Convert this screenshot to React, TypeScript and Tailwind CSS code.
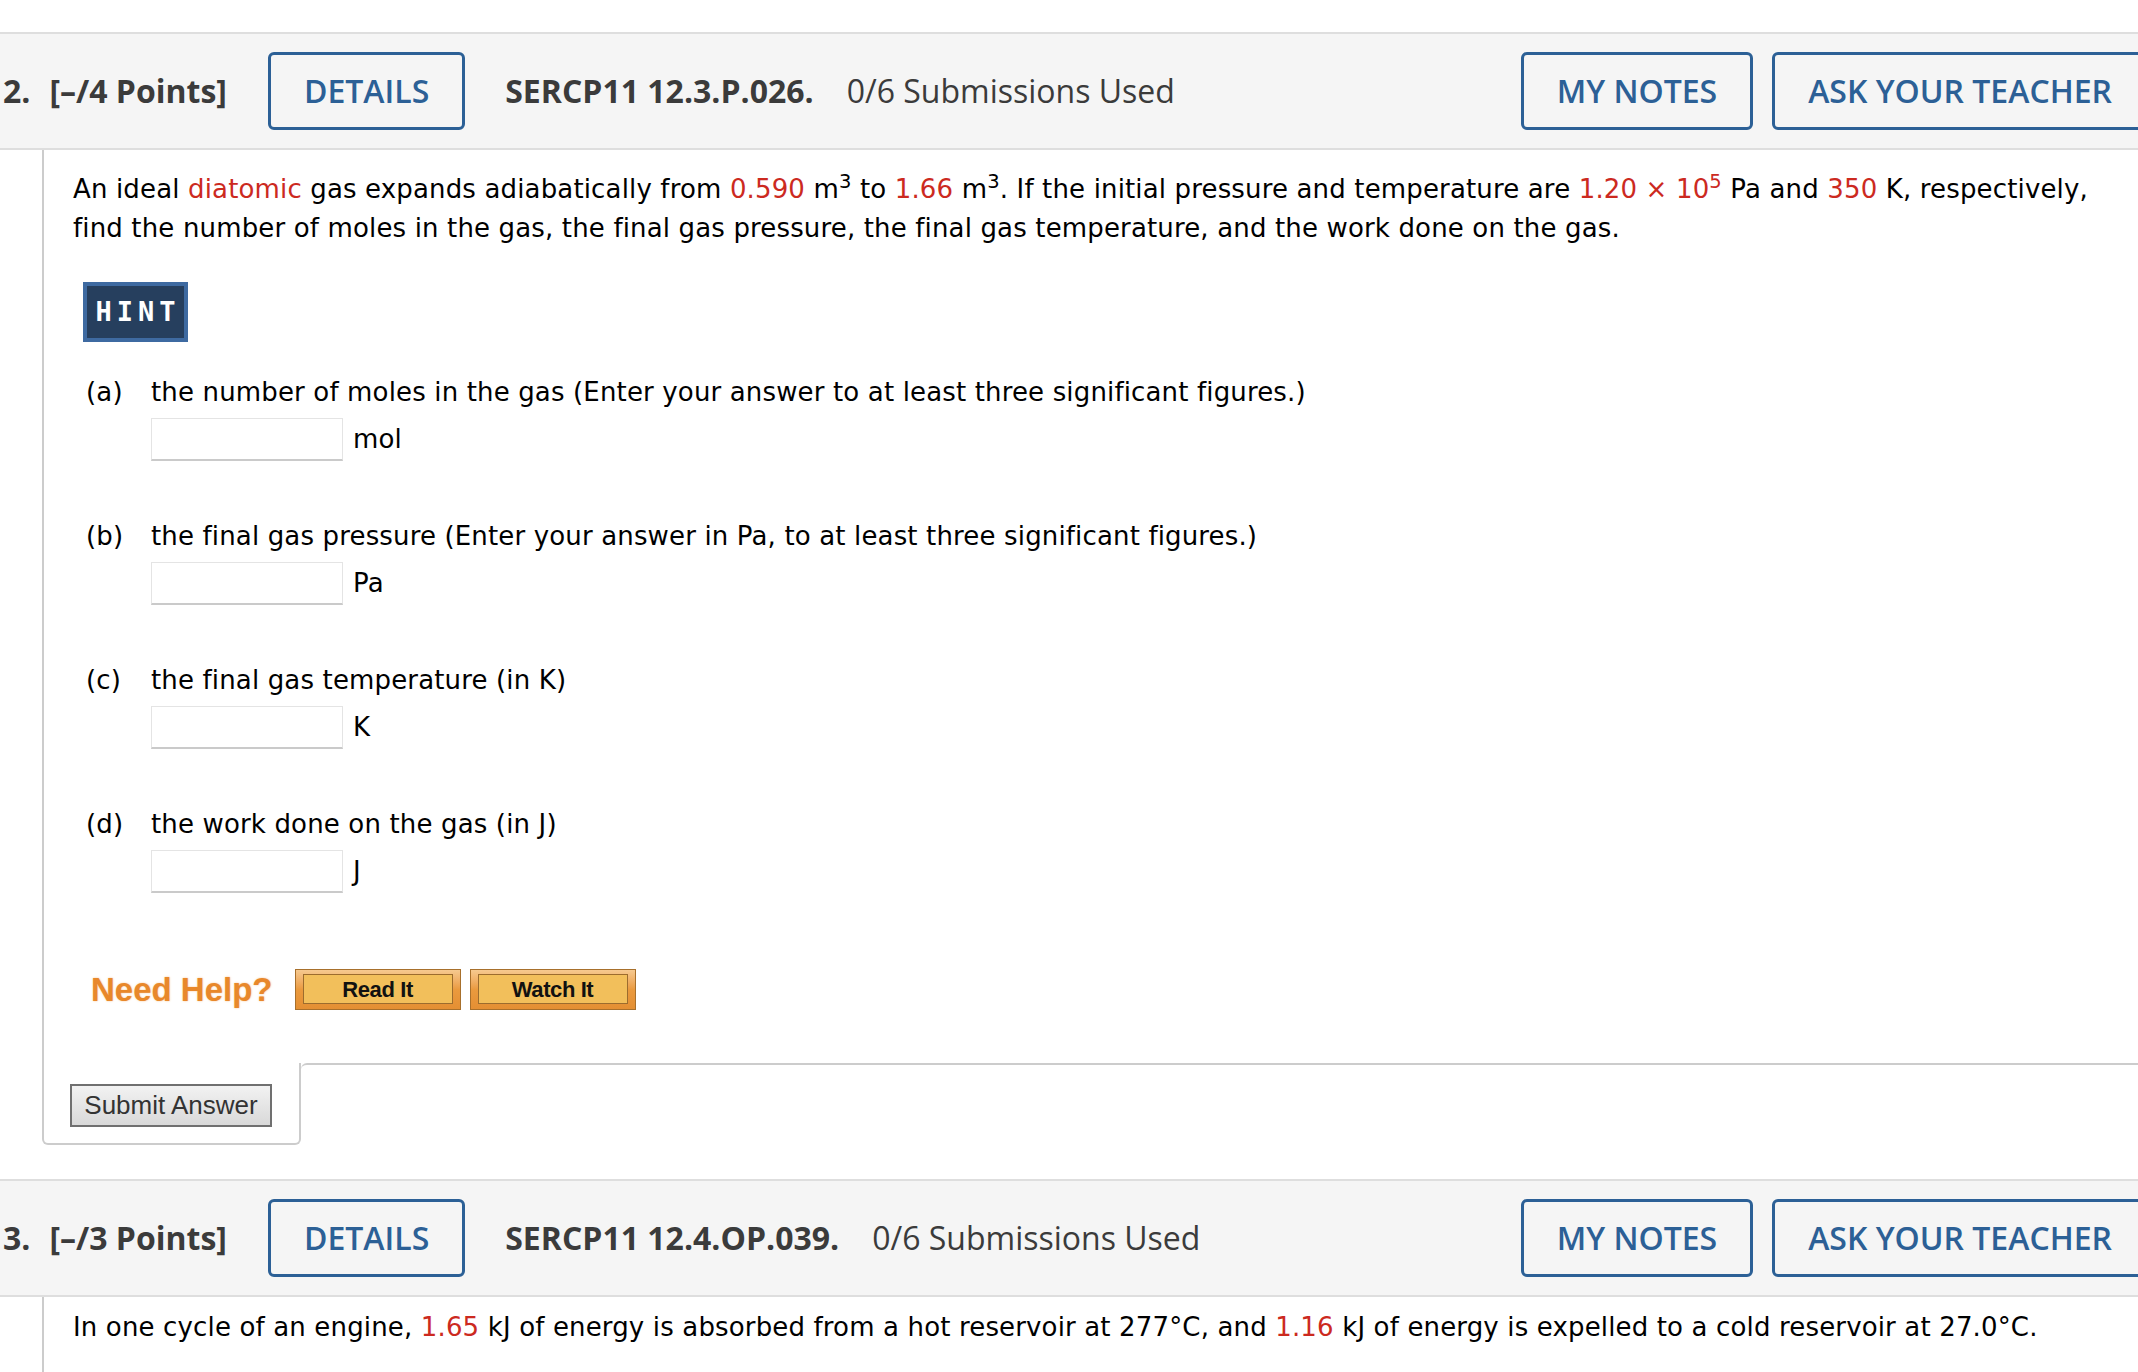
import React from "react";

const RED = "text-[#cc2a1f]";

function Header({ num, pts, code }: { num: string; pts: string; code: string }) {
  return (
    <div className="w-[2152px] h-[118px] bg-[#f5f5f5] border-y-2 border-[#dedede] flex items-center text-[32px] text-[#3b3b3b] tracking-normal [font-family:'Open_Sans',sans-serif]">
      <span className="ml-[3px] font-bold">{num}</span>
      <span className="ml-[19px] font-bold">{pts}</span>
      <button className="ml-[41px] h-[78px] px-[33px] border-[3px] border-[#2c6096] rounded-[6px] text-[#2c6096] font-semibold">
        DETAILS
      </button>
      <span className="ml-[40px] font-bold">{code}</span>
      <span className="ml-[33px] font-normal">0/6 Submissions Used</span>
      <div className="flex-1" />
      <button className="h-[78px] px-[33px] border-[3px] border-[#2c6096] rounded-[6px] text-[#2c6096] font-semibold">
        MY NOTES
      </button>
      <button className="ml-[19px] mr-[4px] h-[78px] px-[33px] border-[3px] border-[#2c6096] rounded-[6px] text-[#2c6096] font-semibold">
        ASK YOUR TEACHER
      </button>
    </div>
  );
}

function Part({ label, text, unit }: { label: string; text: string; unit: string }) {
  return (
    <div className="mt-[56px] first:mt-[31px]">
      <div className="flex leading-[39px]">
        <span className="ml-[13px] w-[65px]">{label}</span>
        <span>{text}</span>
      </div>
      <div className="flex items-center mt-[6px] ml-[78px]">
        <div className="w-[192px] h-[43px] border border-[#e4e4e4] border-b-2 border-b-[#cacaca] bg-white" />
        <span className="ml-[10px]">{unit}</span>
      </div>
    </div>
  );
}

function HelpButton({ label }: { label: string }) {
  return (
    <div className="w-[166px] h-[41px] border border-[#a8702c] bg-gradient-to-b from-[#f6c98f] via-[#ea9a3e] to-[#e48f33] pt-[4px] pb-[5px] px-[7px]">
      <div className="w-full h-full border border-[#9c6c2e] bg-[#f2bf5b] flex items-center justify-center text-[22px] font-bold text-[#111] tracking-[-0.4px] [font-family:'Liberation_Sans',Arial,sans-serif]">
        {label}
      </div>
    </div>
  );
}

export default function App() {
  return (
    <div className="w-full overflow-hidden bg-white [font-family:'DejaVu_Sans',Verdana,sans-serif] text-[26px] tracking-[0.15px] text-black">
      <div className="w-[2152px] pt-[32px]">
        <Header num="2." pts="[–/4 Points]" code="SERCP11 12.3.P.026." />

        <div className="ml-[42px] border-l-2 border-[#cccccc] pl-[29px] pt-[20px] pb-[48px]">
          <p className="leading-[39px] w-[2030px]">
            An ideal <span className={RED}>diatomic</span> gas expands adiabatically from{" "}
            <span className={RED}>0.590</span> m<sup>3</sup> to <span className={RED}>1.66</span> m
            <sup>3</sup>. If the initial pressure and temperature are{" "}
            <span className={RED}>
              1.20 × 10<sup>5</sup>
            </span>{" "}
            Pa and <span className={RED}>350</span> K, respectively, find the number of moles in the gas, the final gas
            pressure, the final gas temperature, and the work done on the gas.
          </p>

          <div className="mt-[34px] ml-[10px] w-[105px] h-[60px] border-4 border-[#3e6aa1] bg-[#263f5e] flex items-center justify-center text-white font-bold text-[27px] tracking-[5px] pl-[5px] [font-family:'DejaVu_Sans_Mono',monospace]">
            HINT
          </div>

          <div>
            <Part
              label="(a)"
              text="the number of moles in the gas (Enter your answer to at least three significant figures.)"
              unit="mol"
            />
            <Part
              label="(b)"
              text="the final gas pressure (Enter your answer in Pa, to at least three significant figures.)"
              unit="Pa"
            />
            <Part label="(c)" text="the final gas temperature (in K)" unit="K" />
            <Part label="(d)" text="the work done on the gas (in J)" unit="J" />
          </div>

          <div className="mt-[72px] ml-[18px] flex items-center tracking-normal">
            <span className="text-[33px] font-bold text-[#e8882b] [font-family:'Liberation_Sans',Arial,sans-serif] [text-shadow:0_0_2px_rgba(240,150,60,0.6)]">
              Need Help?
            </span>
            <div className="ml-[22px] flex gap-[9px]">
              <HelpButton label="Read It" />
              <HelpButton label="Watch It" />
            </div>
          </div>
        </div>

        <div className="flex">
          <div className="ml-[42px] w-[259px] border-l-2 border-r-2 border-b-2 border-[#cccccc] rounded-b-[6px] pt-[21px] pb-[16px] pl-[26px]">
            <button className="w-[202px] h-[43px] border-2 border-[#707070] bg-gradient-to-b from-[#f2f2f2] to-[#d9d9d9] text-[26px] tracking-normal text-[#333] [font-family:'Liberation_Sans',Arial,sans-serif]">
              Submit Answer
            </button>
          </div>
          <div className="flex-1 border-t-2 border-[#cccccc] rounded-tl-[6px]" />
        </div>

        <div className="mt-[34px]">
          <Header num="3." pts="[–/3 Points]" code="SERCP11 12.4.OP.039." />
          <div className="ml-[42px] border-l-2 border-[#cccccc] pl-[29px] pt-[11px] pb-[40px]">
            <p className="leading-[39px]">
              In one cycle of an engine, <span className={RED}>1.65</span> kJ of energy is absorbed from a hot reservoir
              at 277°C, and <span className={RED}>1.16</span> kJ of energy is expelled to a cold reservoir at 27.0°C.
            </p>
          </div>
        </div>
      </div>
    </div>
  );
}
